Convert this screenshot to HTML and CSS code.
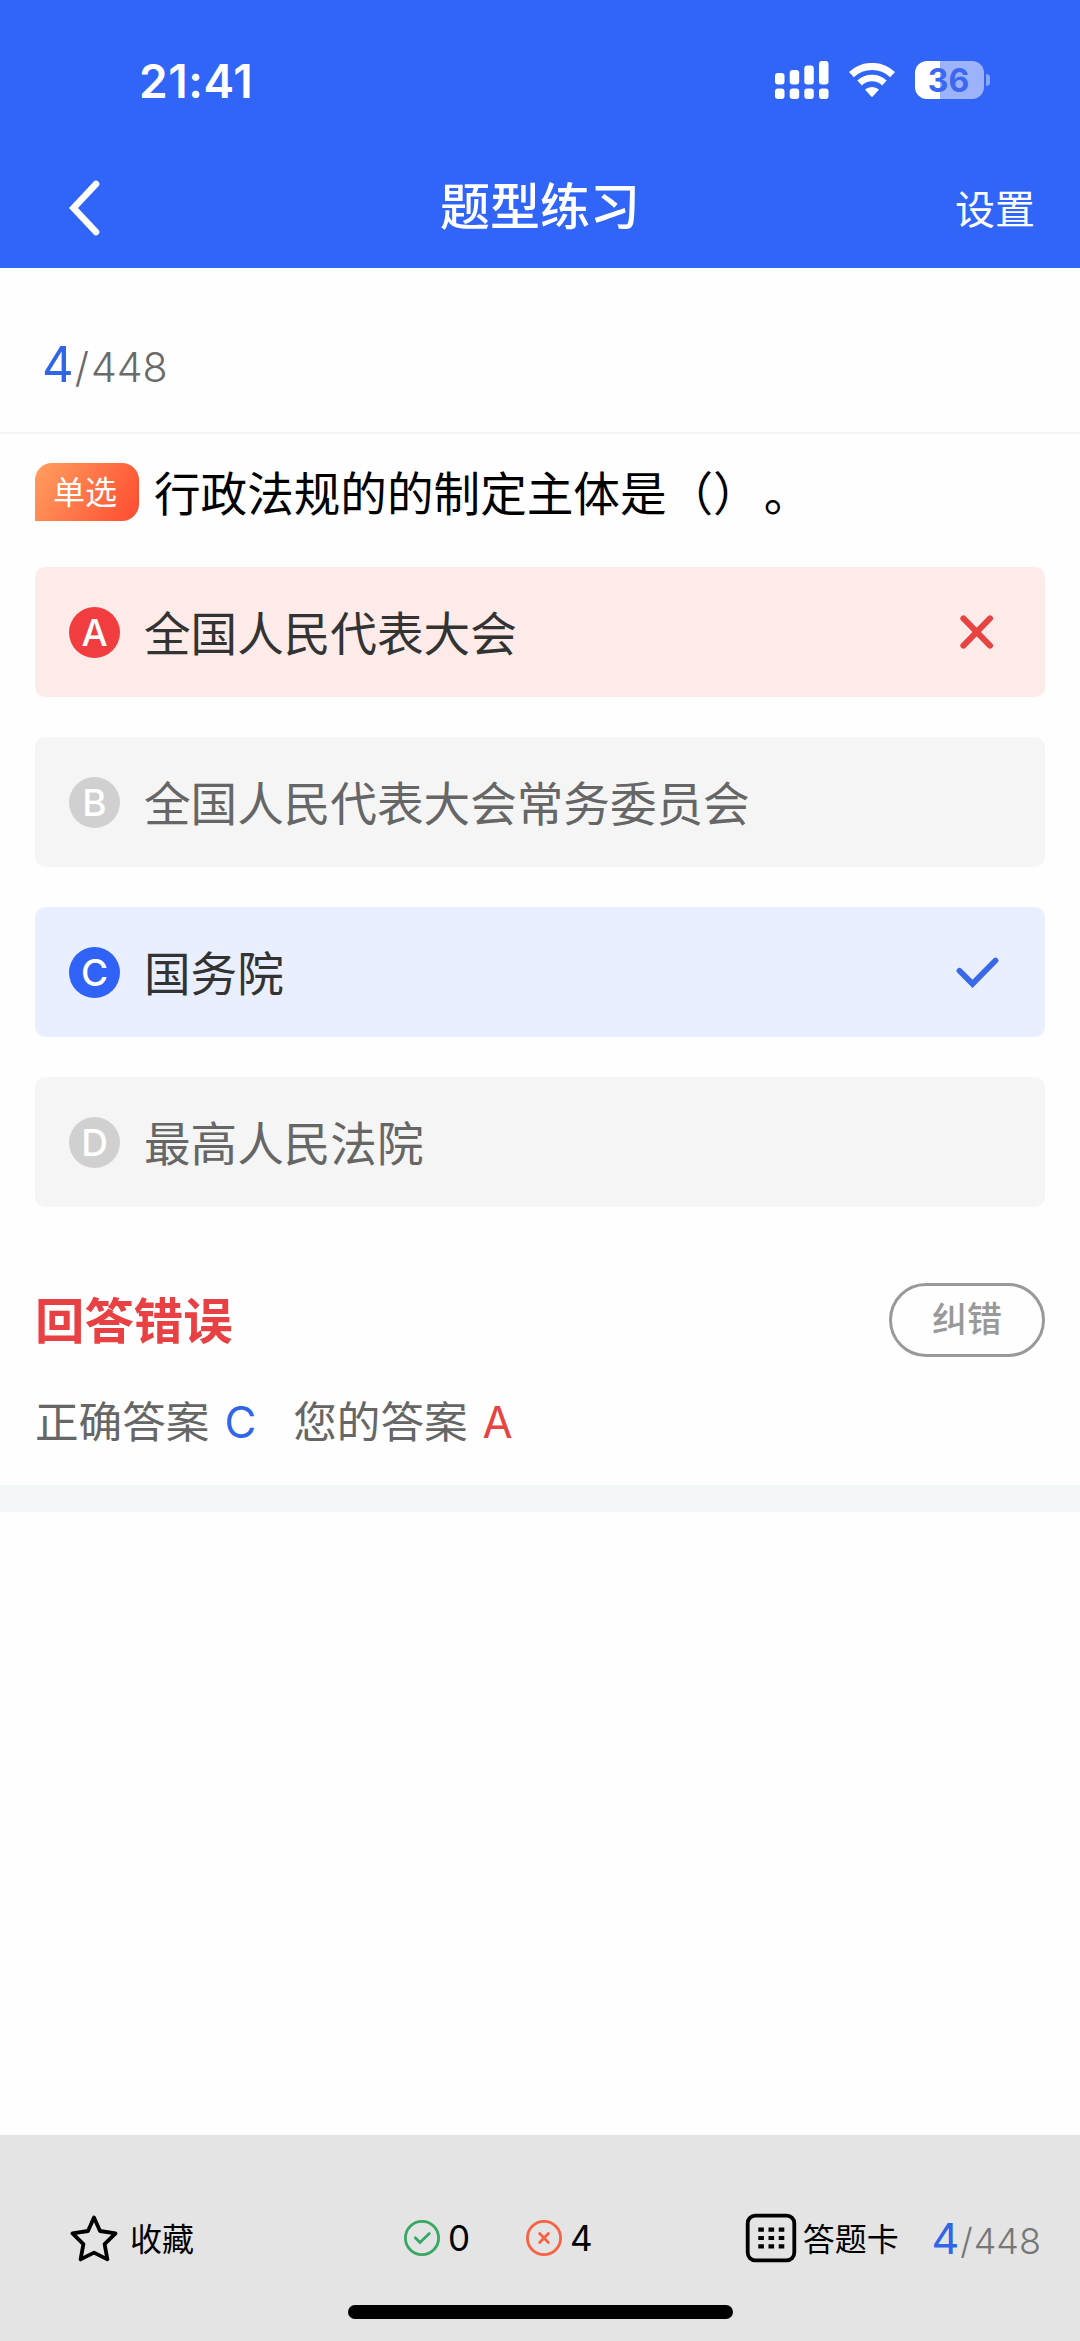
FILE: index.html
```html
<!DOCTYPE html>
<html lang="zh-CN">
<head>
    <meta charset="UTF-8">
    <meta name="viewport" content="width=device-width, initial-scale=1.0">
    <title>题型练习</title>
    <link rel="stylesheet" href="styles.css">
</head>
<body>

    <!-- Header -->
    <header class="header">
        <div class="status-bar">
            <div class="time">21:41</div>
            <div class="status-icons">
                <svg class="signal" width="54" height="38" viewBox="0 0 54 38" fill="#fff">
                    <rect x="0" y="12" width="9.5" height="11.5" rx="3"/>
                    <rect x="14.7" y="9" width="9.5" height="14.5" rx="3"/>
                    <rect x="29.3" y="4.5" width="9.5" height="19" rx="3"/>
                    <rect x="44" y="0" width="9.5" height="23.5" rx="3"/>
                    <rect x="0" y="27.5" width="9.5" height="10.5" rx="3"/>
                    <rect x="14.7" y="27.5" width="9.5" height="10.5" rx="3"/>
                    <rect x="29.3" y="27.5" width="9.5" height="10.5" rx="3"/>
                    <rect x="44" y="27.5" width="9.5" height="10.5" rx="3"/>
                </svg>
                <svg class="wifi" width="46" height="34" viewBox="0 0 46 34">
                    <path d="M2.4 11.6 A30 30 0 0 1 43.6 11.6" fill="none" stroke="#fff" stroke-width="7"/>
                    <path d="M10.6 20 A18 18 0 0 1 35.4 20" fill="none" stroke="#fff" stroke-width="6.6"/>
                    <path d="M16 26.6 A10.5 10.5 0 0 1 30 26.6 L24 33.2 Q23 34.2 22 33.2 Z" fill="#fff"/>
                </svg>
                <div class="battery"><span>36</span></div>
                <div class="battery-cap"></div>
            </div>
        </div>
        <div class="nav-bar">
            <svg class="back" width="32" height="56" viewBox="0 0 32 56">
                <path d="M28 4 L5.5 28 L28 52" fill="none" stroke="#fff" stroke-width="6.6" stroke-linecap="round" stroke-linejoin="miter"/>
            </svg>
            <h1>题型练习</h1>
            <div class="setting">设置</div>
        </div>
    </header>

    <!-- Progress -->
    <div class="progress"><span class="current">4</span><span class="slash">/</span><span class="total">448</span></div>

    <!-- Question -->
    <main class="question">
        <div class="title">
            <span class="tag">单选</span>
            <span class="title-text">行政法规的的制定主体是（）<span class="stop">。</span></span>
        </div>

        <div class="options">
            <div class="option wrong">
                <span class="letter">A</span>
                <span class="text">全国人民代表大会</span>
                <svg class="mark" width="44" height="40" viewBox="0 0 44 40">
                    <path d="M8.4 6.4 L35 33.6 M35 6.4 L8.4 33.6" fill="none" stroke="#e84343" stroke-width="6" stroke-linecap="round"/>
                </svg>
            </div>
            <div class="option">
                <span class="letter">B</span>
                <span class="text">全国人民代表大会常务委员会</span>
            </div>
            <div class="option right">
                <span class="letter">C</span>
                <span class="text">国务院</span>
                <svg class="mark" width="44" height="40" viewBox="0 0 44 40">
                    <path d="M4.5 18.8 L17.5 31.8 L40.5 8.5" fill="none" stroke="#3968e8" stroke-width="5.8" stroke-linecap="round"/>
                </svg>
            </div>
            <div class="option">
                <span class="letter">D</span>
                <span class="text">最高人民法院</span>
            </div>
        </div>

        <!-- Result -->
        <div class="result">
            <h2>回答错误</h2>
            <div class="report">纠错</div>
        </div>
        <div class="answers">
            <span>正确答案</span><b class="blue">C</b>
            <span class="yours">您的答案</span><b class="red">A</b>
        </div>
    </main>
    <div class="divider"></div>

    <!-- Bottom bar -->
    <footer class="footer">
        <div class="collect">
            <svg width="48" height="48" viewBox="0 0 48 48">
                <path d="M24 3.5 L30 17 L45.5 19.4 L34.6 30.2 L37.4 45.4 L24 38.6 L10.6 45.4 L13.4 30.2 L2.5 19.4 L18 17 Z" fill="none" stroke="#000" stroke-width="3.8" stroke-linejoin="round"/>
            </svg>
            <span>收藏</span>
        </div>
        <div class="count right-count">
            <svg width="38" height="38" viewBox="0 0 38 38" fill="none" stroke="#36a862" stroke-width="2.8" stroke-linecap="round">
                <circle cx="19" cy="19" r="16.6"/>
                <path d="M12.3 18.8 L17 23.6 L26.3 14.6"/>
            </svg>
            <span>0</span>
        </div>
        <div class="count wrong-count">
            <svg width="38" height="38" viewBox="0 0 38 38" fill="none" stroke="#fa6142" stroke-width="2.8" stroke-linecap="round">
                <circle cx="19" cy="19" r="16.6"/>
                <path d="M14.6 14.6 L23.4 23.4 M23.4 14.6 L14.6 23.4"/>
            </svg>
            <span>4</span>
        </div>
        <div class="card">
            <svg width="52" height="50" viewBox="0 0 52 50">
                <rect x="2.7" y="2.7" width="46.6" height="44.6" rx="7.5" fill="none" stroke="#000" stroke-width="3.8"/>
                <path d="M13.3 16.7 H39.3 M13.3 25 H39.3 M13.3 33.3 H39.3" stroke="#000" stroke-width="4.2" stroke-dasharray="5.6 4.6"/>
            </svg>
            <span>答题卡</span>
        </div>
        <div class="progress small"><span class="current">4</span><span class="slash">/</span><span class="total">448</span></div>
        <div class="home-indicator"></div>
    </footer>

</body>
</html>
```
FILE: styles.css
```css
* {
    box-sizing: border-box;
}

body {
    margin: 0;
    width: 1080px;
    height: 2341px;
    display: flex;
    flex-direction: column;
    overflow: hidden;
    background-color: #fefefe;
    font-family: Inter, "Noto Sans CJK SC", sans-serif;
    color: #000;
}

svg {
    display: block;
    flex: none;
}

/* Header */
.header {
    height: 268px;
    background-color: #3165f8;
    color: #fff;
}

.status-bar {
    height: 160px;
    display: flex;
    justify-content: space-between;
    padding: 0 90px 0 139px;
    align-items: center;
}

.time {
    font-size: 46px;
    font-weight: 600;
    letter-spacing: 0.6px;
    line-height: 1;
    padding-top: 1px;
}

.status-icons {
    display: flex;
    align-items: center;
}

.wifi {
    margin: 0 20px;
}

.battery {
    width: 69px;
    height: 38px;
    border-radius: 12px;
    background: linear-gradient(to right, #fff 25px, #9cb3fb 25px);
    color: #3b68ef;
    font-size: 32px;
    font-weight: 700;
    line-height: 39px;
    padding-right: 2px;
    text-align: center;
}

.battery-cap {
    width: 4px;
    height: 12px;
    margin-left: 2px;
    border-radius: 0 4px 4px 0;
    background-color: #8aa6fa;
}

.nav-bar {
    height: 94px;
    display: grid;
    grid-template-columns: 1fr auto 1fr;
    align-items: center;
    padding: 0 45px;
}

.back {
    margin: 2px 0 0 23px;
}

h1 {
    margin: 0;
    font-size: 50px;
    font-weight: 500;
    line-height: 1;
}

.setting {
    justify-self: end;
    font-size: 40px;
}

/* Question counter */
.progress {
    height: 166px;
    flex: none;
    display: flex;
    align-items: baseline;
    padding: 68px 0 0 42px;
    border-bottom: 2px solid #f6f6f6;
    line-height: 58px;
    color: #6a6a6a;
    font-size: 41px;
    font-weight: 300;
}

.progress .current {
    font-size: 49px;
    font-weight: 400;
    color: #3165e8;
}

.progress .slash {
    margin: 0 2px 0 1px;
}

/* Question */
.question {
    padding: 29px 35px 0;
}

.title {
    display: flex;
    align-items: center;
    height: 58px;
}

.tag {
    width: 104px;
    height: 58px;
    padding-right: 4px;
    border-radius: 17px 17px 17px 0;
    background: linear-gradient(120deg, #ff9f60, #ff4b30);
    color: #fff;
    font-size: 32px;
    line-height: 59px;
    text-align: center;
}

.title-text {
    margin-left: 15px;
    padding-top: 4px;
    font-size: 46.6px;
    line-height: 58px;
    text-spacing-trim: space-all;
}

.title-text .stop {
    margin-left: 4px;
}

.options {
    margin-top: 46px;
    display: flex;
    flex-direction: column;
    gap: 40px;
}

.option {
    height: 130px;
    display: flex;
    align-items: center;
    padding: 0 46px 0 34px;
    border-radius: 10px;
    background-color: #f5f5f5;
    color: #666;
    font-size: 46.6px;
}

.option .letter {
    width: 51px;
    height: 51px;
    margin-right: 24px;
    border-radius: 50%;
    background-color: #d1d0d0;
    color: #fff;
    font-size: 37px;
    font-weight: 500;
    line-height: 52px;
    text-align: center;
}

.option .text {
    padding-bottom: 4px;
}

.option .mark {
    margin-left: auto;
}

.option.wrong {
    background-color: #fdebe9;
    color: #333;
}

.option.wrong .letter {
    background-color: #f13d3f;
}

.option.right {
    background-color: #e9effe;
    color: #333;
}

.option.right .letter {
    background-color: #3062f8;
}

/* Result */
.result {
    margin-top: 76px;
    display: flex;
    justify-content: space-between;
    align-items: center;
}

h2 {
    margin: 0;
    padding-top: 2px;
    font-size: 49.4px;
    font-weight: 700;
    line-height: 72px;
    color: #e94043;
}

.report {
    width: 156px;
    height: 74px;
    border: 3px solid #999;
    border-radius: 37px;
    color: #999;
    font-size: 35px;
    font-weight: 500;
    line-height: 67px;
    text-align: center;
}

.answers {
    height: 128px;
    display: flex;
    align-items: baseline;
    padding-top: 36px;
    font-size: 43.6px;
    line-height: 60px;
    color: #666;
}

.answers b {
    margin-left: 15px;
    font-weight: 400;
}

.answers .yours {
    margin-left: 37px;
}

.blue {
    color: #3165e8;
}

.red {
    color: #e84343;
}

.divider {
    height: 27px;
    background-color: #f3f7f8;
}

/* Bottom bar */
.footer {
    position: relative;
    height: 206px;
    margin-top: auto;
    display: flex;
    align-items: center;
    padding: 0 39px 0 70px;
    background-color: #e4e4e4;
    font-size: 32px;
}

.footer > div {
    display: flex;
    align-items: center;
}

.collect span,
.card span {
    padding-bottom: 3px;
}

.collect span {
    margin-left: 12px;
}

.count {
    font-size: 35px;
}

.count span {
    margin-left: 7px;
}

.right-count {
    margin-left: 209px;
}

.wrong-count {
    margin-left: 55px;
}

.card {
    margin-left: 152px;
}

.card span {
    margin-left: 6px;
}

.footer .small {
    height: auto;
    margin-left: auto;
    padding: 2px 0 0;
    border: 0;
    align-items: baseline;
    font-size: 36px;
    color: #777;
}

.small .current {
    font-size: 43px;
}

.small .slash {
    margin: 0 1px;
}

.footer .home-indicator {
    position: absolute;
    left: 348px;
    bottom: 22px;
    width: 385px;
    height: 14px;
    border-radius: 7px;
    background-color: #000;
}
```
